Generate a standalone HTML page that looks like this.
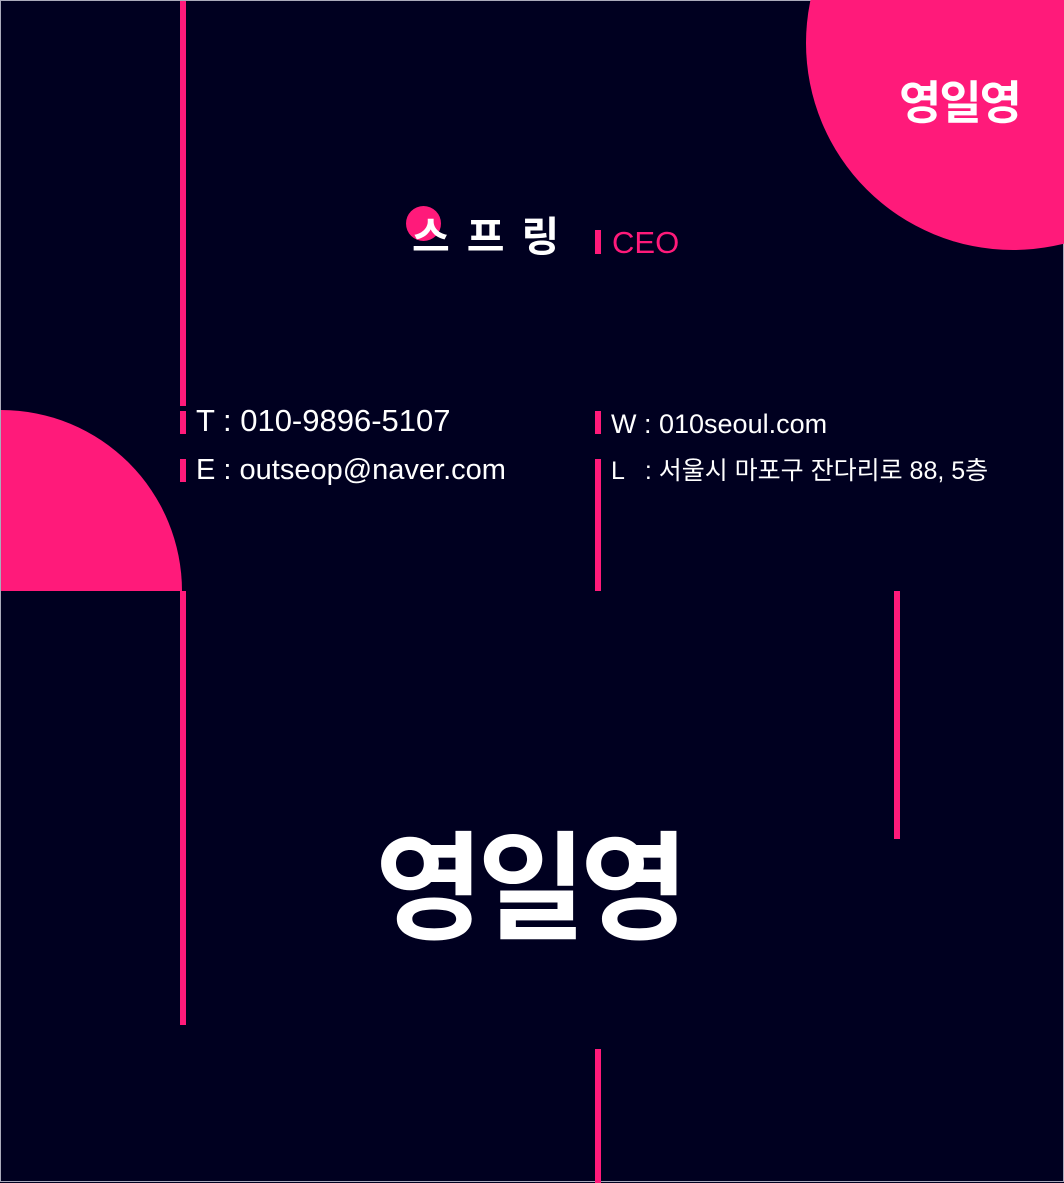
<!DOCTYPE html>
<html><head><meta charset="utf-8">
<style>
html,body{margin:0;padding:0}
body{width:1064px;height:1182px;position:relative;overflow:hidden;background:#000020;font-family:"Liberation Sans","Noto Sans CJK KR",sans-serif;box-sizing:border-box;border:1px solid #aab}
.p{position:absolute;background:#ff1a7a}
.t{position:absolute;color:#fff;white-space:nowrap}
</style></head><body>
<div class="p" style="left:805px;top:-165px;width:414px;height:414px;border-radius:50%"></div>
<div class="p" style="left:-181px;top:409px;width:362px;height:362px;border-radius:50%;clip-path:inset(0 0 181px 181px)"></div>
<div class="p" style="left:179px;top:0;width:6px;height:405px"></div>
<div class="p" style="left:179px;top:410px;width:6px;height:23px"></div>
<div class="p" style="left:179px;top:458px;width:6px;height:23px"></div>
<div class="p" style="left:179px;top:590px;width:6px;height:434px"></div>
<div class="p" style="left:594px;top:229px;width:6px;height:24px"></div>
<div class="p" style="left:594px;top:410px;width:6px;height:23px"></div>
<div class="p" style="left:594px;top:458px;width:6px;height:132px"></div>
<div class="p" style="left:594px;top:1048px;width:6px;height:134px"></div>
<div class="p" style="left:893px;top:590px;width:6px;height:248px"></div>
<div class="t" style="left:898px;top:66px;font-size:46px;font-weight:bold;font-family:'Noto Sans CJK KR',sans-serif;line-height:66px;letter-spacing:-2px">영일영</div>
<div class="p" style="left:405px;top:205px;width:35px;height:35px;border-radius:50%"></div>
<div class="t" style="left:411px;top:204px;font-size:41px;font-family:'Noto Sans CJK KR',sans-serif;line-height:56px;letter-spacing:17px;font-weight:bold">스프링</div>
<div class="t" style="left:611px;top:224px;font-size:31px;color:#ff1a7a;line-height:36px">CEO</div>
<div class="t" style="left:195px;top:402px;font-size:31px;line-height:36px">T : 010-9896-5107</div>
<div class="t" style="left:195px;top:451px;font-size:29px;line-height:36px">E : outseop@naver.com</div>
<div class="t" style="left:610px;top:405px;font-size:27px;line-height:36px">W : 010seoul.com</div>
<div class="t" style="left:610px;top:452px;font-size:25px;line-height:36px">L &nbsp;&nbsp;: 서울시 마포구 잔다리로 88, 5층</div>
<div class="t" style="left:374px;top:793px;font-size:118px;font-weight:bold;font-family:'Noto Sans CJK KR',sans-serif;line-height:170px;letter-spacing:-6px">영일영</div>
</body></html>
